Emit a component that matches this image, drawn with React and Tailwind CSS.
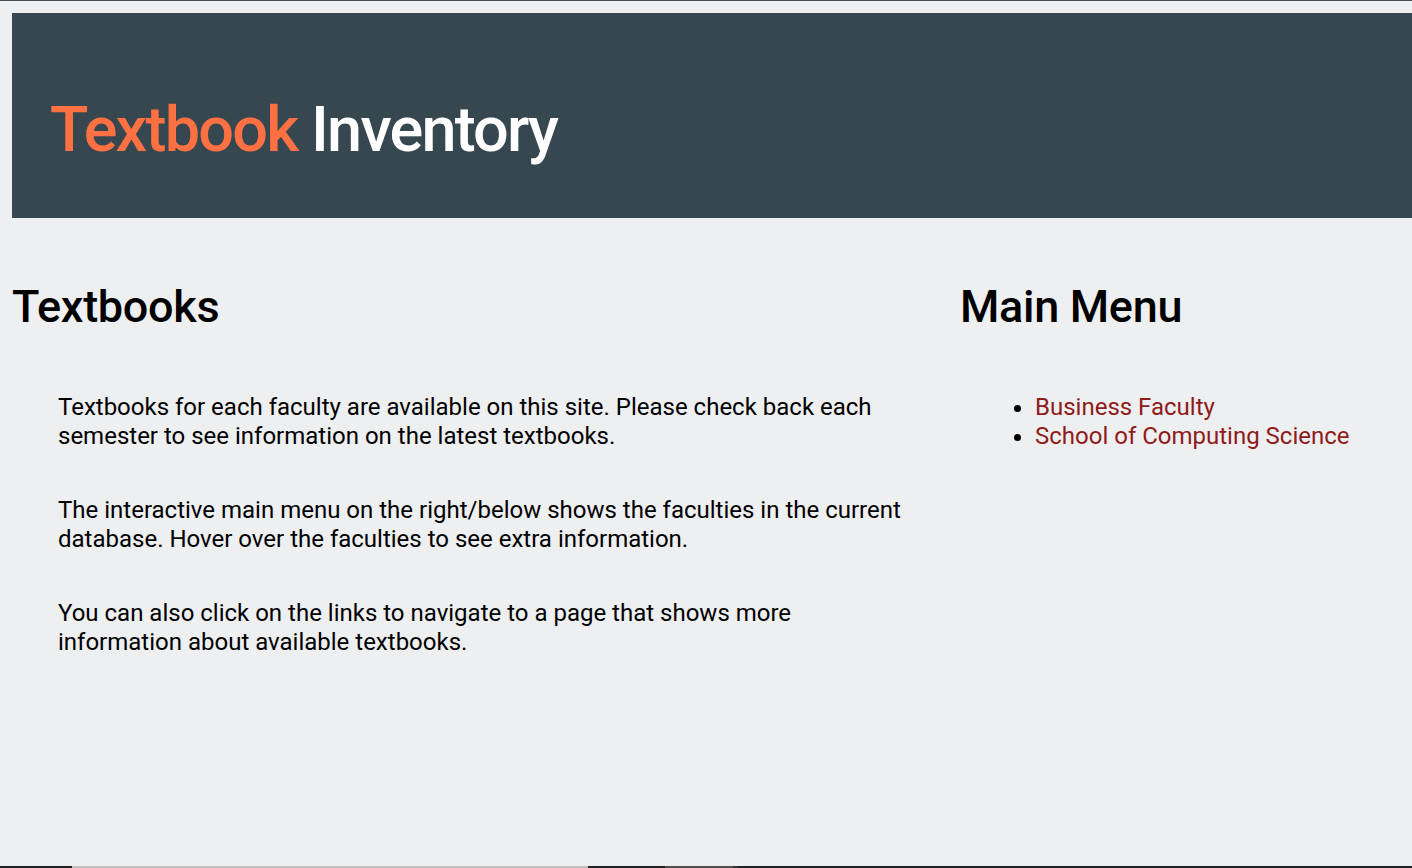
export default function App() {
  return (
    <div className="flex h-[868px] flex-col overflow-hidden bg-[#eeeff1] font-['Roboto',sans-serif] text-black">
      <div className="h-px bg-[#4a4d51]" />
      <div className="flex-1 pl-3 pt-3">
        <header className="flex h-[205px] items-center bg-[#37474f] pl-[38px] pt-[27px]">
          <h1 className="text-[63px] font-medium leading-none tracking-[-1.8px]">
            <span className="text-[#ff7043]">Textbook</span>{' '}
            <span className="text-white">Inventory</span>
          </h1>
        </header>

        <main className="flex pt-[61px]">
          <section className="w-[948px]">
            <h2 className="text-[45px] font-medium leading-[56px] tracking-[-0.3px]">Textbooks</h2>
            <div className="flex flex-col gap-[45px] pl-[46px] pt-[58px] text-[24px] leading-[29px]">
              <p className="w-[860px]">
                Textbooks for each faculty are available on this site. Please check back each semester to see
                information on the latest textbooks.
              </p>
              <p className="w-[860px]">
                The interactive main menu on the right/below shows the faculties in the current database. Hover
                over the faculties to see extra information.
              </p>
              <p className="w-[760px]">
                You can also click on the links to navigate to a page that shows more information about
                available textbooks.
              </p>
            </div>
          </section>

          <section className="flex-1">
            <h2 className="text-[45px] font-medium leading-[56px] tracking-[-0.3px]">Main Menu</h2>
            <ul className="list-disc pl-[75px] pt-[58px] text-[24px] leading-[29px]">
              <li>
                <a href="#" className="text-[#8f1b1b]">Business Faculty</a>
              </li>
              <li>
                <a href="#" className="text-[#8f1b1b]">School of Computing Science</a>
              </li>
            </ul>
          </section>
        </main>
      </div>

      <div className="flex h-[2px]">
        <div className="w-[72px] bg-[#202124]" />
        <div className="w-[516px] bg-[#c0c0c0]" />
        <div className="w-[77px] bg-[#202124]" />
        <div className="w-[68px] bg-[#505050]" />
        <div className="w-[5px] bg-[#333333]" />
        <div className="flex-1 bg-[#202124]" />
      </div>
    </div>
  );
}
